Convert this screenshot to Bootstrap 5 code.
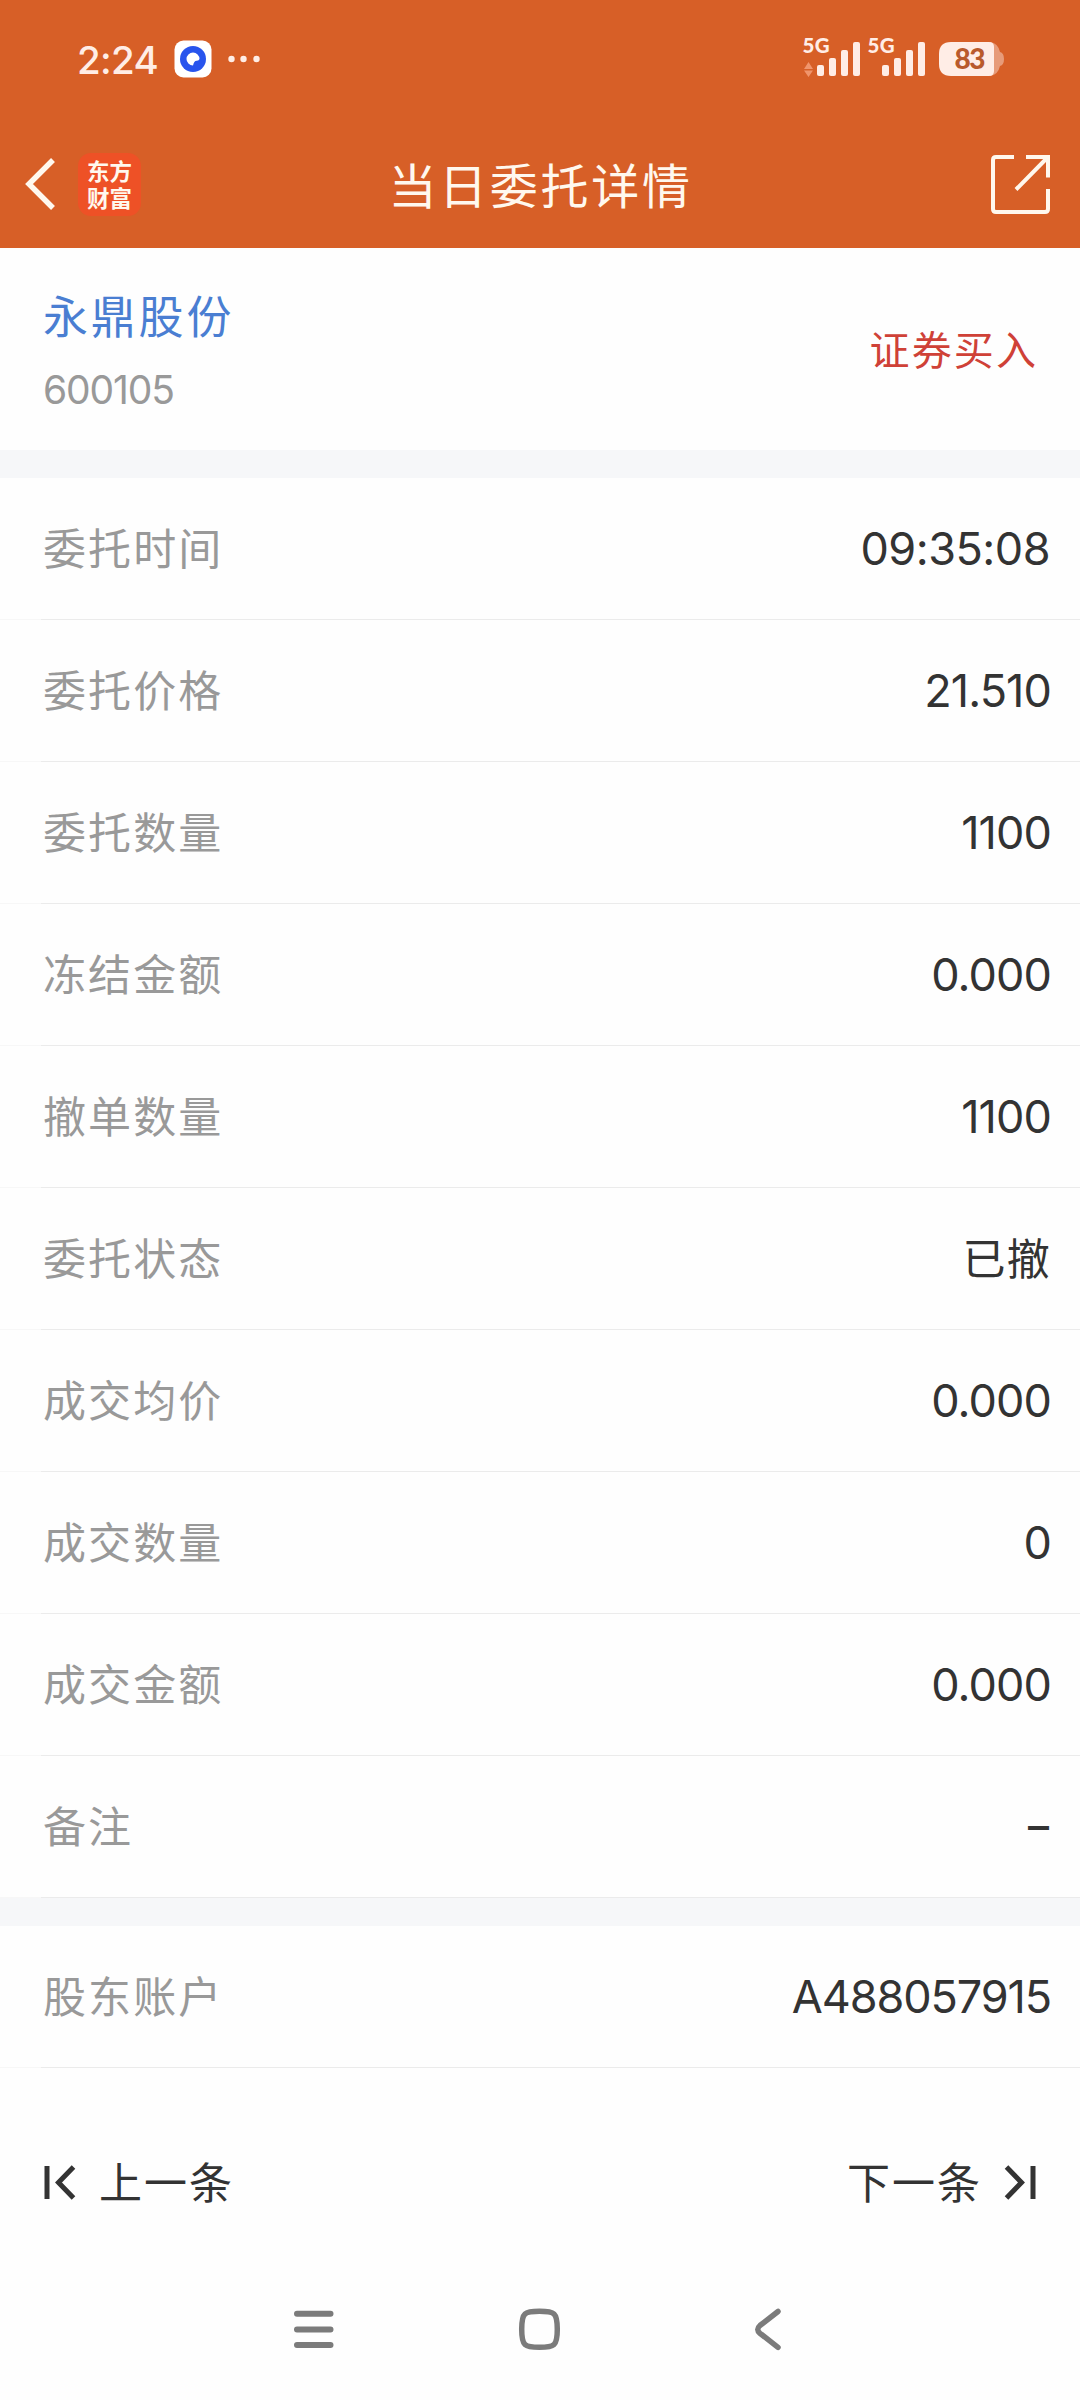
<!DOCTYPE html>
<html lang="zh-CN">
<head>
<meta charset="utf-8">
<meta name="viewport" content="width=device-width, initial-scale=1">
<title>当日委托详情</title>
<link href="https://cdn.jsdelivr.net/npm/bootstrap@5.3.0/dist/css/bootstrap.min.css" rel="stylesheet">
<style>
  body { font-family: Inter, "Noto Sans CJK SC", sans-serif; color: #333; background: #fefefe; line-height: 1.2; }
  .screen { width: 1080px; height: 2400px; overflow: hidden; }
  .top-area { background: #d75f27; height: 248px; }
  .status-bar { height: 118px; padding: 0 76px 0 77px; color: #ffede6; }
  .clock { font-size: 38.5px; font-weight: 500; letter-spacing: -.7px; line-height: 46px; padding-top: 2px; }
  .app-icon { margin-left: 16px; }
  .more-icon { margin-left: 16px; }
  .title-bar { height: 130px; padding: 2px 29px 0 24px; color: #fff8ee; }
  .title-side { width: 130px; }
  .title-text { font-size: 48px; letter-spacing: 2.7px; font-weight: 400; padding: 5px 0 0 6px; }
  .brand-tile { width: 63px; height: 63px; border-radius: 13px; background: #ee5126; font: 700 22.5px/27px "Noto Sans CJK SC", sans-serif; margin-left: 22px; }
  .stock-head { height: 202px; padding: 4px 42px 0 43px; }
  .stock-name { font-size: 45px; letter-spacing: 2.8px; line-height: 60px; color: #4a7ed2; }
  .stock-code { font-size: 39px; line-height: 48px; color: #999; letter-spacing: -1.1px; margin-top: 18px; }
  .side-tag { font-size: 40px; letter-spacing: 2.1px; color: #cf4137; }
  .gap-strip { height: 28px; background: #f6f7f9; }
  .detail-row { height: 142px; padding: 0 29px 0 43px; border-bottom: 1px solid #ececec; border-image: linear-gradient(to right, #f7f7f7 42px, #ebebeb 42px) 1; }
  .detail-label { font-size: 43px; letter-spacing: 2.1px; color: #999; padding-top: 3px; }
  .detail-value { font-size: 45px; letter-spacing: -.9px; color: #333; }
  .clock-value { letter-spacing: -.5px; padding-right: 1px; }
  .account-value { letter-spacing: -1.1px; }
  .dash-value { padding-right: 3px; font-weight: 500; font-size: 42px; }
  .zh { font-size: 43px; letter-spacing: 1.2px; padding-top: 3px; }
  .pager { height: 229px; padding: 0 43px 0 43px; font-size: 43px; letter-spacing: 2px; }
  .pager span { padding-top: 2px; }
  .prev-text { margin-left: 22px; }
  .next-text { margin-right: 21px; }
  .sys-nav { height: 103px; padding-left: 293px; }
  .home-icon { margin-left: 183px; }
  .back-icon { margin-left: 192px; }
</style>
</head>
<body>
<main class="screen d-flex flex-column">
  <header class="top-area">
    <div class="status-bar d-flex align-items-center">
      <span class="clock">2:24</span>
      <svg class="app-icon" width="38" height="38" viewBox="0 0 38 38"><rect width="37" height="37" x=".5" y=".5" rx="9" fill="#fff"/><circle cx="19" cy="19" r="13" fill="#2854ed"/><path d="M25.500 19A6.500 6.500 0 1 0 19 25.500Q20 21 22.500 20.800Q25 21 25.500 19Z" fill="#fff"/></svg>
      <svg class="more-icon" width="32" height="8" viewBox="0 0 32 8" fill="#ffede6"><circle cx="3.500" cy="4" r="3.200"/><circle cx="15.500" cy="4" r="3.200"/><circle cx="28.500" cy="4" r="3.200"/></svg>
      <svg class="ms-auto" width="208" height="62" viewBox="796 28 208 62" fill="#ffede6">
        <g font-family="Lato, sans-serif" font-weight="900" font-size="20.500"><text x="802.500" y="53" textLength="27">5G</text><text x="867.500" y="53" textLength="27">5G</text></g>
        <path d="M804 69L808.500 62L813 69ZM804 70.500H813L808.500 77Z" fill="#f0956c"/>
        <g id="bars"><rect x="817" y="65" width="7" height="11" rx="2"/><rect x="829" y="58" width="7" height="18" rx="2"/><rect x="841" y="50" width="7" height="26" rx="2"/><rect x="853" y="42" width="7" height="34" rx="2"/></g>
        <use href="#bars" x="65"/>
        <path d="M990 42Q998 43 1000 52Q1004 53 1004 59Q1004 65 1000 66Q998 75 990 76Z" fill="#e79b79"/>
        <path d="M951 42H989Q994 42 994 47V71Q994 76 989 76H951Q939 76 939 64V54Q939 42 951 42Z"/>
        <text x="954.500" y="69" font-family="Lato, sans-serif" font-weight="900" font-size="28" textLength="31" fill="#b95a2c">83</text>
      </svg>
    </div>
    <nav class="title-bar d-flex align-items-center justify-content-between">
      <div class="title-side d-flex align-items-center">
        <svg width="32" height="52" viewBox="0 0 32 52" fill="none" stroke="#fff8ee" stroke-width="5.500"><path d="M29 2L5 26L29 50"/></svg>
        <div class="brand-tile d-flex flex-column align-items-center justify-content-center"><span>东方</span><span>财富</span></div>
      </div>
      <h1 class="title-text m-0">当日委托详情</h1>
      <div class="title-side d-flex justify-content-end">
        <svg width="62" height="62" viewBox="0 0 62 62" fill="none" stroke="#fff8ee" stroke-width="4"><path d="M25 4H7Q4 4 4 7V56Q4 59 7 59H56Q59 59 59 56V36M37 4H59V24.500M59 4L27 36.500"/></svg>
      </div>
    </nav>
  </header>

  <section class="stock-head d-flex align-items-center justify-content-between">
    <div>
      <div class="stock-name">永鼎股份</div>
      <div class="stock-code">600105</div>
    </div>
    <div class="side-tag">证券买入</div>
  </section>
  <div class="gap-strip"></div>

  <section>
    <div class="detail-row d-flex align-items-center justify-content-between"><span class="detail-label">委托时间</span><span class="detail-value clock-value">09:35:08</span></div>
    <div class="detail-row d-flex align-items-center justify-content-between"><span class="detail-label">委托价格</span><span class="detail-value">21.510</span></div>
    <div class="detail-row d-flex align-items-center justify-content-between"><span class="detail-label">委托数量</span><span class="detail-value">1100</span></div>
    <div class="detail-row d-flex align-items-center justify-content-between"><span class="detail-label">冻结金额</span><span class="detail-value">0.000</span></div>
    <div class="detail-row d-flex align-items-center justify-content-between"><span class="detail-label">撤单数量</span><span class="detail-value">1100</span></div>
    <div class="detail-row d-flex align-items-center justify-content-between"><span class="detail-label">委托状态</span><span class="detail-value zh">已撤</span></div>
    <div class="detail-row d-flex align-items-center justify-content-between"><span class="detail-label">成交均价</span><span class="detail-value">0.000</span></div>
    <div class="detail-row d-flex align-items-center justify-content-between"><span class="detail-label">成交数量</span><span class="detail-value">0</span></div>
    <div class="detail-row d-flex align-items-center justify-content-between"><span class="detail-label">成交金额</span><span class="detail-value">0.000</span></div>
    <div class="detail-row d-flex align-items-center justify-content-between"><span class="detail-label">备注</span><span class="detail-value dash-value">–</span></div>
  </section>
  <div class="gap-strip"></div>
  <section>
    <div class="detail-row d-flex align-items-center justify-content-between"><span class="detail-label">股东账户</span><span class="detail-value account-value">A488057915</span></div>
  </section>

  <div class="pager d-flex align-items-center justify-content-between">
    <div class="d-flex align-items-center">
      <svg width="34" height="36" viewBox="0 0 34 36" fill="none" stroke="#333" stroke-width="5"><path d="M4 1V34M30.500 2L15.500 17.500L30.500 33"/></svg>
      <span class="prev-text">上一条</span>
    </div>
    <div class="d-flex align-items-center">
      <span class="next-text">下一条</span>
      <svg width="34" height="36" viewBox="0 0 34 36" fill="none" stroke="#333" stroke-width="5"><path d="M30 1V34M3.500 2L18.500 17.500L3.500 33"/></svg>
    </div>
  </div>

  <footer class="sys-nav d-flex">
    <svg width="42" height="66" viewBox="293 2297 42 66" stroke="#7b7b7b" stroke-width="6" stroke-linecap="round"><path d="M297 2313.700H330.500M297 2329.400H330.500M297 2345H330.500"/></svg>
    <svg class="home-icon" width="44" height="66" viewBox="518 2297 44 66" fill="none" stroke="#7b7b7b" stroke-width="5.500"><path d="M539.500 2311.300Q551 2311.300 554 2314Q557.300 2317 557.300 2329.300Q557.300 2341.500 554 2344.500Q551 2347.300 539.500 2347.300Q528 2347.300 525 2344.500Q521.700 2341.500 521.700 2329.300Q521.700 2317 525 2314Q528 2311.300 539.500 2311.300Z"/></svg>
    <svg class="back-icon" width="28" height="66" viewBox="752 2297 28 66" fill="none" stroke="#7b7b7b" stroke-width="5.500" stroke-linecap="round"><path d="M776 2311.500L758 2325.500Q753.500 2329.400 758 2333.300L776 2347.300"/></svg>
  </footer>
</main>
<script src="https://cdn.jsdelivr.net/npm/bootstrap@5.3.0/dist/js/bootstrap.bundle.min.js"></script>
</body>
</html>
